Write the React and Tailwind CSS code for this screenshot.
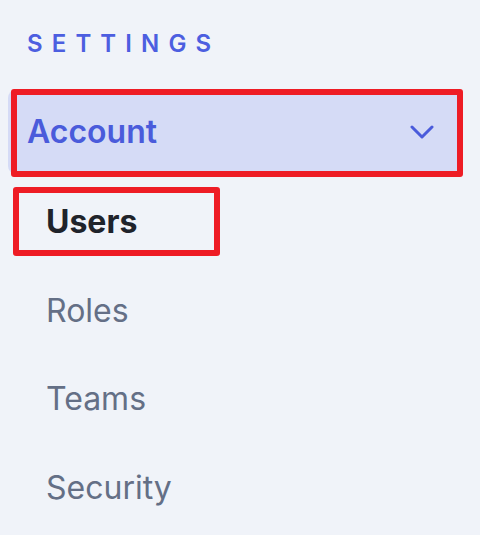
import React from "react";

export default function App() {
  const items = ["Roles", "Teams", "Security"];
  return (
    <div className="relative w-[480px] h-[535px] overflow-hidden bg-[#f0f3f9] font-['Inter',sans-serif]">
      <div className="px-2 pt-[28px]">
        <div className="pl-[19px] text-[24px] leading-[32px] font-semibold tracking-[0.38em] text-[#4c5ee0]">
          SETTINGS
        </div>
        <div className="mt-[30px] h-[84px] w-[452px] rounded-lg bg-[#d5dbf6] flex items-center justify-between pl-[19px] pr-[26px]">
          <span className="text-[32px] leading-[84px] font-semibold text-[#4a5bdb]">Account</span>
          <svg width="24" height="14" viewBox="0 0 24 14" fill="none" className="mt-[-1px]">
            <path d="M2 2 L12 12 L22 2" stroke="#4a5bdb" strokeWidth="3" strokeLinecap="round" strokeLinejoin="round" />
          </svg>
        </div>
        <div className="mt-[4px] flex flex-col">
          <div className="h-[88.5px] pl-[38px] text-[32px] leading-[88px] font-bold text-[#1f232b]">Users</div>
          {items.map((t) => (
            <div key={t} className="h-[88.5px] pl-[38px] text-[32px] leading-[88px] text-[#646f86]">
              {t}
            </div>
          ))}
        </div>
      </div>
      <div className="absolute left-[11px] top-[89px] w-[452px] h-[88px] rounded-[3px] border-[6px] border-[#ee1c25]" />
      <div className="absolute left-[13px] top-[187px] w-[207px] h-[69px] rounded-[3px] border-[6px] border-[#ee1c25]" />
    </div>
  );
}
